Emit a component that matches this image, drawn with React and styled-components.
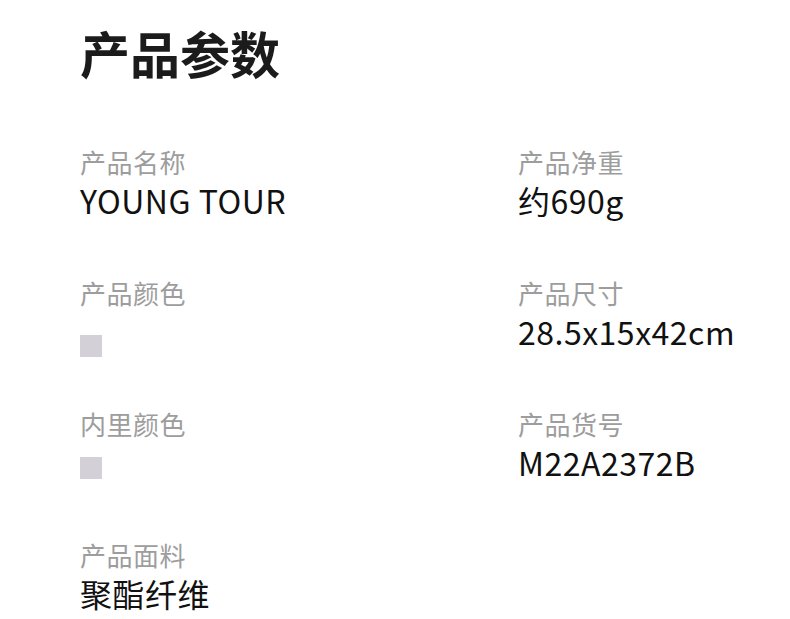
import React from "react";
import styled, { createGlobalStyle } from "styled-components";

const Global = createGlobalStyle`
  html, body { margin: 0; padding: 0; background: #ffffff; }
  body { font-family: "Noto Sans CJK SC", "Noto Sans", sans-serif; }
`;

const Page = styled.div`
  width: 790px;
  height: 619px;
  box-sizing: border-box;
  padding: 22px 0 0 80px;
  background: #fff;
  overflow: hidden;
`;

const Title = styled.h1`
  margin: 0;
  font-size: 50px;
  line-height: 60px;
  font-weight: 700;
  color: #1b1b1b;
  letter-spacing: 0;
`;

const Grid = styled.div`
  margin-top: 64px;
  display: grid;
  grid-template-columns: 438px 1fr;
  row-gap: 57px;
`;

const Cell = styled.div`
  display: flex;
  flex-direction: column;
  gap: 2px;
`;

const Label = styled.div`
  font-size: 26px;
  line-height: 32px;
  letter-spacing: 0.5px;
  color: #9d9d9d;
`;

const Value = styled.div`
  font-size: 32px;
  line-height: 40px;
  height: 40px;
  letter-spacing: 0.5px;
  color: #111111;
  white-space: nowrap;
`;

const Swatch = styled.div`
  width: 22px;
  height: 22px;
  margin-top: ${(p) => p.$offset}px;
  background: ${(p) => p.$color};
`;

const items = [
  { label: "产品名称", value: "YOUNG TOUR" },
  { label: "产品净重", value: "约690g" },
  { label: "产品颜色", swatch: "#d4d0d8", offset: 24 },
  { label: "产品尺寸", value: "28.5x15x42cm" },
  { label: "内里颜色", swatch: "#d4d0d8", offset: 15 },
  { label: "产品货号", value: "M22A2372B" },
  { label: "产品面料", value: "聚酯纤维" },
];

export default function App() {
  return (
    <>
      <Global />
      <Page>
        <Title>产品参数</Title>
        <Grid>
          {items.map((it) => (
            <Cell key={it.label}>
              <Label>{it.label}</Label>
              <Value>
                {it.swatch ? <Swatch $color={it.swatch} $offset={it.offset} /> : it.value}
              </Value>
            </Cell>
          ))}
        </Grid>
      </Page>
    </>
  );
}
